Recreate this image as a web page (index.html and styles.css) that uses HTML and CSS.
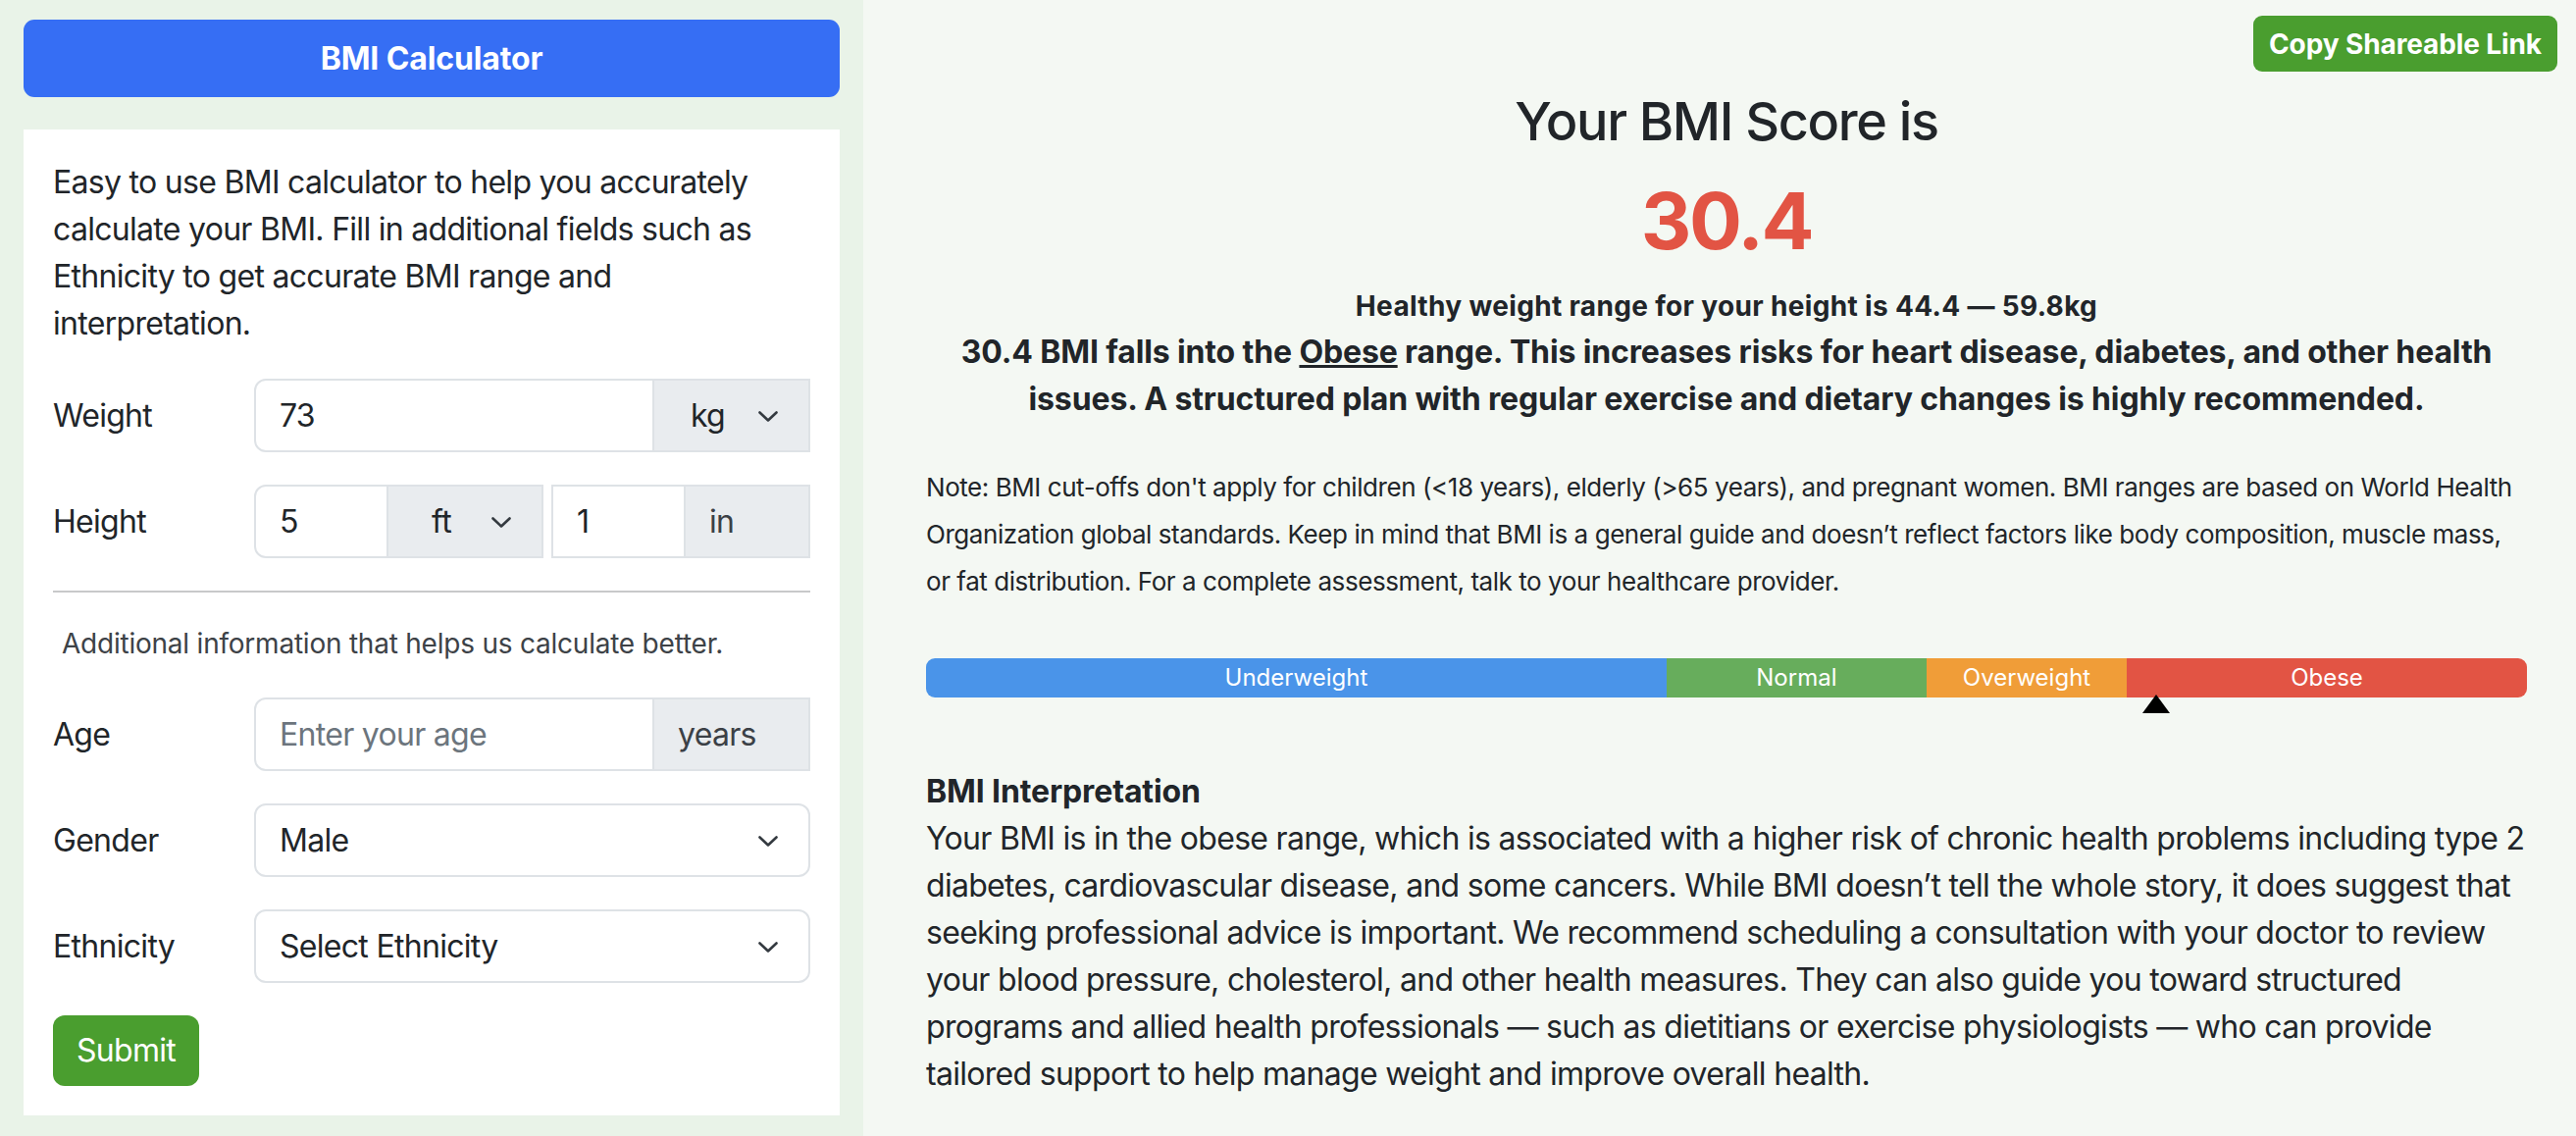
FILE: index.html
```html
<!DOCTYPE html>
<html lang="en">
<head>
<meta charset="utf-8">
<title>BMI Calculator</title>
<link rel="stylesheet" href="styles.css">
</head>
<body>
<div class="page">
  <aside class="sidebar">
    <div class="app-title">BMI Calculator</div>
    <form class="card">
      <p class="intro">Easy to use BMI calculator to help you accurately calculate your BMI. Fill in additional fields such as Ethnicity to get accurate BMI range and interpretation.</p>

      <div class="field">
        <label class="field-label">Weight</label>
        <div class="group">
          <input class="control grow" type="text" value="73">
          <div class="picker addon w-unit"><span class="picker-text">kg</span><svg class="chev" viewBox="0 0 20 11"><path d="M1.5 1.5 10 9.5 18.5 1.5"/></svg></div>
        </div>
      </div>

      <div class="field">
        <label class="field-label">Height</label>
        <div class="group">
          <input class="control grow" type="text" value="5">
          <div class="picker addon w-ft"><span class="picker-text">ft</span><svg class="chev" viewBox="0 0 20 11"><path d="M1.5 1.5 10 9.5 18.5 1.5"/></svg></div>
          <input class="control grow square gap-left" type="text" value="1">
          <span class="addon-text w-in">in</span>
        </div>
      </div>

      <hr class="divider">

      <p class="extra">Additional information that helps us calculate better.</p>

      <div class="field">
        <label class="field-label">Age</label>
        <div class="group">
          <input class="control grow" type="text" placeholder="Enter your age">
          <span class="addon-text w-unit">years</span>
        </div>
      </div>

      <div class="field">
        <label class="field-label">Gender</label>
        <div class="picker full"><span class="picker-value">Male</span><svg class="chev" viewBox="0 0 20 11"><path d="M1.5 1.5 10 9.5 18.5 1.5"/></svg></div>
      </div>

      <div class="field">
        <label class="field-label">Ethnicity</label>
        <div class="picker full"><span class="picker-value">Select Ethnicity</span><svg class="chev" viewBox="0 0 20 11"><path d="M1.5 1.5 10 9.5 18.5 1.5"/></svg></div>
      </div>

      <button class="submit" type="button">Submit</button>
    </form>
  </aside>

  <main class="result">
    <div class="toolbar"><button class="share" type="button">Copy Shareable Link</button></div>
    <h3 class="score-title">Your BMI Score is</h3>
    <div class="score">30.4</div>
    <p class="healthy">Healthy weight range for your height is 44.4 — 59.8kg</p>
    <p class="verdict">30.4 BMI falls into the <u>Obese</u> range. This increases risks for heart disease, diabetes, and other health issues. A structured plan with regular exercise and dietary changes is highly recommended.</p>
    <p class="note"><small>Note: BMI cut-offs don't apply for children (&lt;18 years), elderly (&gt;65 years), and pregnant women. BMI ranges are based on World Health Organization global standards. Keep in mind that BMI is a general guide and doesn’t reflect factors like body composition, muscle mass, or fat distribution. For a complete assessment, talk to your healthcare provider.</small></p>

    <div class="scale">
      <div class="bar">
        <div class="seg seg-under" style="width:46.25%">Underweight</div>
        <div class="seg seg-normal" style="width:16.25%">Normal</div>
        <div class="seg seg-over" style="width:12.5%">Overweight</div>
        <div class="seg seg-obese" style="width:25%">Obese</div>
      </div>
      <span class="marker" style="left:76%"></span>
    </div>

    <p class="interp"><strong>BMI Interpretation</strong><br>Your BMI is in the obese range, which is associated with a higher risk of chronic health problems including type 2 diabetes, cardiovascular disease, and some cancers. While BMI doesn’t tell the whole story, it does suggest that seeking professional advice is important. We recommend scheduling a consultation with your doctor to review your blood pressure, cholesterol, and other health measures. They can also guide you toward structured programs and allied health professionals — such as dietitians or exercise physiologists — who can provide tailored support to help manage weight and improve overall health.</p>
  </main>
</div>
</body>
</html>
```

FILE: styles.css
```css
* { box-sizing: border-box; }

html, body {
  margin: 0;
  padding: 0;
}

body {
  font-family: Inter, "Noto Sans", "Liberation Sans", sans-serif;
  font-size: 32px;
  line-height: 1.5;
  letter-spacing: -0.022em;
  color: #212529;
  background: #f4f8f3;
}

.page {
  display: flex;
  min-height: 1158px;
}

/* ---------- Sidebar ---------- */
.sidebar {
  width: 880px;
  flex: 0 0 880px;
  background: #e9f3e8;
  padding: 20px 24px 22px;
}

.app-title {
  height: 79px;
  border-radius: 11px;
  background: #366ef4;
  color: #fff;
  font-weight: 700;
  letter-spacing: -0.004em;
  display: flex;
  align-items: center;
  justify-content: center;
}

.card {
  margin-top: 33px;
  background: #fff;
  padding: 30px;
}

.intro {
  margin: 0 0 32px;
}

.field {
  display: grid;
  grid-template-columns: 205px minmax(0, 1fr);
  align-items: center;
  margin-bottom: 33px;
}

.field-label {
  line-height: 48px;
}

.group {
  display: flex;
  min-width: 0;
  height: 75px;
}

.control {
  font: inherit;
  letter-spacing: inherit;
  color: #212529;
  width: 100%;
  height: 75px;
  min-width: 0;
  border: 2px solid #dee2e6;
  border-radius: 12px 0 0 12px;
  padding: 0 24px;
  background: #fff;
  outline: none;
}

.control::placeholder {
  color: #6c757d;
}

.grow { flex: 1 1 0; }

.square { border-radius: 0; }

.gap-left { margin-left: 8px; }

.picker {
  position: relative;
  display: flex;
  align-items: center;
  height: 75px;
  border: 2px solid #dee2e6;
  padding: 0 72px 0 24px;
  background: #fff;
  color: #212529;
}

.picker.addon {
  background: #e9ecef;
  margin-left: -2px;
  border-radius: 0;
}

.picker.full {
  border-radius: 12px;
}

.picker-text {
  flex: 1;
  text-align: center;
}

.picker-value {
  flex: 1;
}

.chev {
  position: absolute;
  right: 31px;
  top: 50%;
  width: 20px;
  height: 11px;
  margin-top: -5px;
  fill: none;
  stroke: #343a40;
  stroke-width: 2.6;
  stroke-linecap: round;
  stroke-linejoin: round;
}

.addon-text {
  display: flex;
  align-items: center;
  height: 75px;
  margin-left: -2px;
  padding: 0 24px;
  background: #e9ecef;
  border: 2px solid #dee2e6;
  color: #3b4046;
}

.w-unit { width: 161px; flex: 0 0 161px; }
.w-ft { width: 160px; flex: 0 0 160px; }
.w-in { width: 129px; flex: 0 0 129px; }

.divider {
  margin: 0 0 31px;
  border: 0;
  border-top: 2px solid #c8c9ca;
}

.extra {
  margin: 0 0 34px;
  padding-left: 9px;
  font-size: 28px;
  line-height: 42px;
  letter-spacing: -0.008em;
  color: #3d4247;
}

.submit {
  font: inherit;
  letter-spacing: inherit;
  color: #fff;
  background: #4a9e2f;
  border: 0;
  border-radius: 12px;
  height: 72px;
  padding: 0 24px;
  width: 149px;
}

/* ---------- Result ---------- */
.result {
  flex: 1;
  min-width: 0;
  padding: 16px 50px 40px 64px;
  text-align: center;
}

.toolbar {
  display: flex;
  justify-content: flex-end;
  margin-right: -31px;
}

.share {
  font: inherit;
  font-size: 28px;
  font-weight: 700;
  line-height: 42px;
  letter-spacing: -0.004em;
  color: #fff;
  background: #4a9e2f;
  border: 0;
  border-radius: 9px;
  height: 57px;
  padding: 0 16px;
}

.score-title {
  margin: 17px 0 0;
  font-size: 54px;
  font-weight: 500;
  line-height: 67px;
  letter-spacing: -0.025em;
}

.score {
  margin-top: 20px;
  font-size: 80px;
  font-weight: 700;
  line-height: 96px;
  letter-spacing: -0.03em;
  color: #e25444;
}

.healthy {
  margin: 18px 0 0;
  font-size: 28px;
  line-height: 42px;
  font-weight: 700;
  letter-spacing: 0.012em;
}

.verdict {
  margin: 2px 0 0;
  font-weight: 700;
  letter-spacing: -0.004em;
}

.note {
  margin: 40px 0 0;
  text-align: left;
}

.note small {
  font-size: 26px;
  letter-spacing: -0.017em;
}

.scale {
  position: relative;
  margin-top: 56px;
}

.bar {
  display: flex;
  height: 40px;
  border-radius: 9px;
  overflow: hidden;
}

.seg {
  color: #fff;
  font-size: 24px;
  line-height: 40px;
  letter-spacing: 0;
  text-align: center;
  white-space: nowrap;
}

.seg-under { background: #4a94e9; }
.seg-normal { background: #67ad5c; }
.seg-over { background: #f09d38; }
.seg-obese { background: #e25444; }

.marker {
  position: absolute;
  top: 37px;
  width: 0;
  height: 0;
  border-left: 14px solid transparent;
  border-right: 14px solid transparent;
  border-bottom: 19px solid #000;
}

.interp {
  margin: 72px 0 0;
  text-align: left;
}

.interp strong {
  letter-spacing: -0.004em;
}
```
